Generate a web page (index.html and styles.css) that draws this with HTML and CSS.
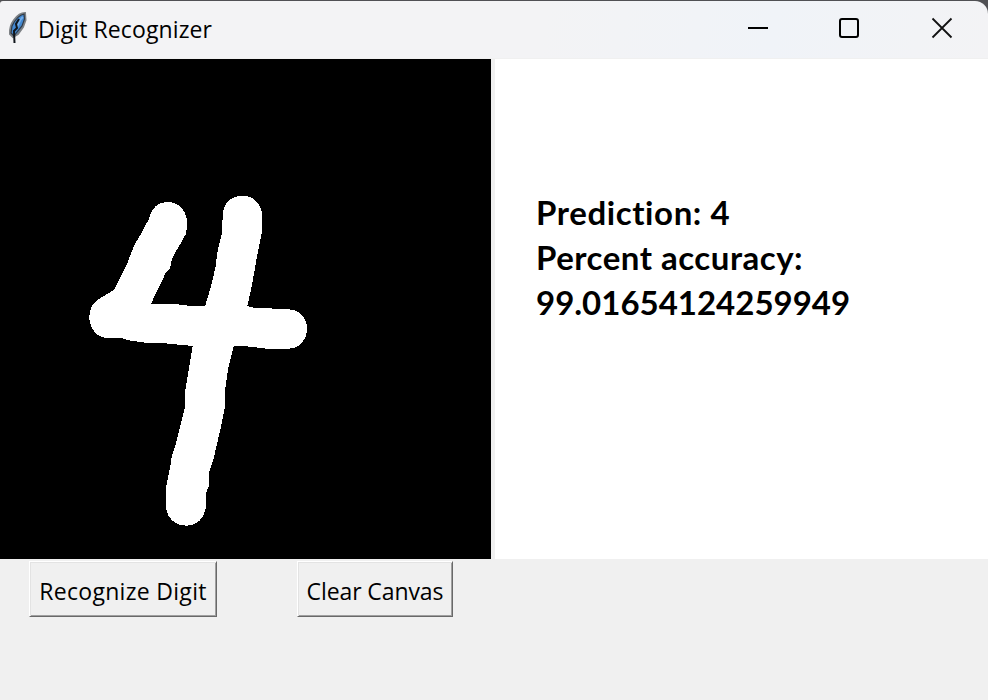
FILE: index.html
```html
<!DOCTYPE html>
<html lang="en">
<head>
<meta charset="utf-8">
<title>Digit Recognizer</title>
<link rel="stylesheet" href="styles.css">
</head>
<body>
<div class="window">
  <header class="titlebar">
    <svg class="feather" width="20" height="34" viewBox="0 0 20 34">
      <path d="M17 2C12 2 9 5 6 9C3 13 1.500 17 2 23L5 26L10 23L15 16L17.500 9Z" fill="#4288d2" stroke="#7d8185" stroke-width="2"/>
      <path d="M16 3C11 4 7 9 4 15L3 22L6 25L9 21L14 15L16.500 8Z" fill="#4288d2" stroke="#343b44" stroke-width="1.200"/>
      <path d="M15 6C12 8 11 12 9 16" fill="none" stroke="#74aeea" stroke-width="2"/>
      <path d="M11 8L8 13L9 17L6 20L6.500 32" fill="none" stroke="#10151b" stroke-width="2"/>
    </svg>
    <h1 class="title">Digit Recognizer</h1>
    <div class="controls">
      <svg width="22" height="22" viewBox="0 0 22 22"><path d="M1 11H21" stroke="#000" stroke-width="2"/></svg>
      <svg width="22" height="22" viewBox="0 0 22 22"><rect x="1" y="2" width="18" height="18" rx="2" fill="none" stroke="#000" stroke-width="2"/></svg>
      <svg width="22" height="22" viewBox="0 0 22 22"><path d="M1.500 1.500L20.500 20.500M20.500 1.500L1.500 20.500" stroke="#111" stroke-width="1.800"/></svg>
    </div>
  </header>
  <main class="content">
    <svg class="canvas" width="491" height="500" viewBox="0 59 491 500" shape-rendering="crispEdges">
      <path fill="#fff" d="M149 219C151 208 158 202 167 202C179 202 187 211 187 223L186.300 233L181 243L176 251L171.700 260L170 268L165.700 273L151 303.700L177 304.300L187 305.500L205.300 305.700L211 286L215.300 268L218 249L222 233L222.700 215C223 203 232 195.700 242.300 195.700C254 195.700 262 205 262 215L261.700 233L257 256L255 268L252 285L247.300 306L253.300 307.700L268 308.300L288 309.300C299 309.300 307 318 307 328.500C307 340 299 348.700 288.300 348.700L267 348.700L244 346L233.700 346L228.300 368L225.300 388L225 407L220.700 428L213.300 460L209 472V486L206 493L205.700 507C205 518 197 525.700 186.500 525.700C174 525.700 166 517 166 506V487L170 468L172 455L175 447L185 407L185.300 390L189 368L192.700 346L167 343.500L150 343.300L127 340L123 338.500L105 337.700C96 337 89.300 327 89.300 317C89.300 309 93 302 99 299L112.700 290.700L115 288L127 264L134.300 245L141 234L144 228Z"/>
    </svg>
    <section class="result">
      <p class="prediction">Prediction: 4</p>
      <p class="accuracy">Percent accuracy:</p>
      <p class="value">99.01654124259949</p>
    </section>
  </main>
  <footer class="actions">
    <button class="btn recognize"><span>Recognize Digit</span></button>
    <button class="btn clear"><span>Clear Canvas</span></button>
  </footer>
</div>
</body>
</html>
```
FILE: styles.css
```css
* { box-sizing: border-box; }
body { margin: 0; background: #505054; }
.window {
  width: 988px;
  height: 700px;
  padding-top: 1px;
  display: flex;
  flex-direction: column;
}
.titlebar {
  height: 58px;
  flex: none;
  display: flex;
  align-items: flex-start;
  background: linear-gradient(100deg, #f3f3f5, #f3f3f5 55%, #f0f3f8 78%, #f3f3f5);
  border-bottom: 1px solid #f0f0f0;
  border-radius: 3px 13px 0 0;
}
.feather { margin: 10px 0 0 8px; }
.title {
  margin: 11px 0 0 10px;
  font: 400 23px/34px "Open Sans", sans-serif;
  letter-spacing: 0.1px;
  color: #000;
  white-space: nowrap;
}
.controls {
  display: flex;
  gap: 70px;
  margin: 16px 35px 0 auto;
}
.content {
  height: 500px;
  flex: none;
  display: flex;
  gap: 4px;
  background: #f0f0f0;
}
.canvas { display: block; background: #000; }
.result {
  flex: 1;
  background: #fff;
  padding: 131px 0 0 41px;
  font: 700 33px/45px Lato, sans-serif;
  font-variant-ligatures: none;
  color: #000;
}
.result p { margin: 0; white-space: nowrap; }
.prediction { letter-spacing: 0.6px; }
.accuracy { letter-spacing: 0.5px; }
.actions {
  flex: 1;
  display: flex;
  align-items: flex-start;
  gap: 80px;
  padding: 2px 0 0 29px;
  background: #f0f0f0;
}
.btn {
  height: 56px;
  padding: 3px 0 0;
  border: 1px solid;
  border-color: #fff #696969 #696969 #fff;
  border-radius: 0;
  background: #f0f0f0;
  box-shadow: inset 1px 1px #e3e3e3, inset -1px -1px #a0a0a0;
  font: 400 23px/32px "Open Sans", sans-serif;
  color: #000;
  white-space: nowrap;
}
.recognize { width: 188px; letter-spacing: 0.3px; }
.clear { width: 156px; letter-spacing: -0.1px; }
```
